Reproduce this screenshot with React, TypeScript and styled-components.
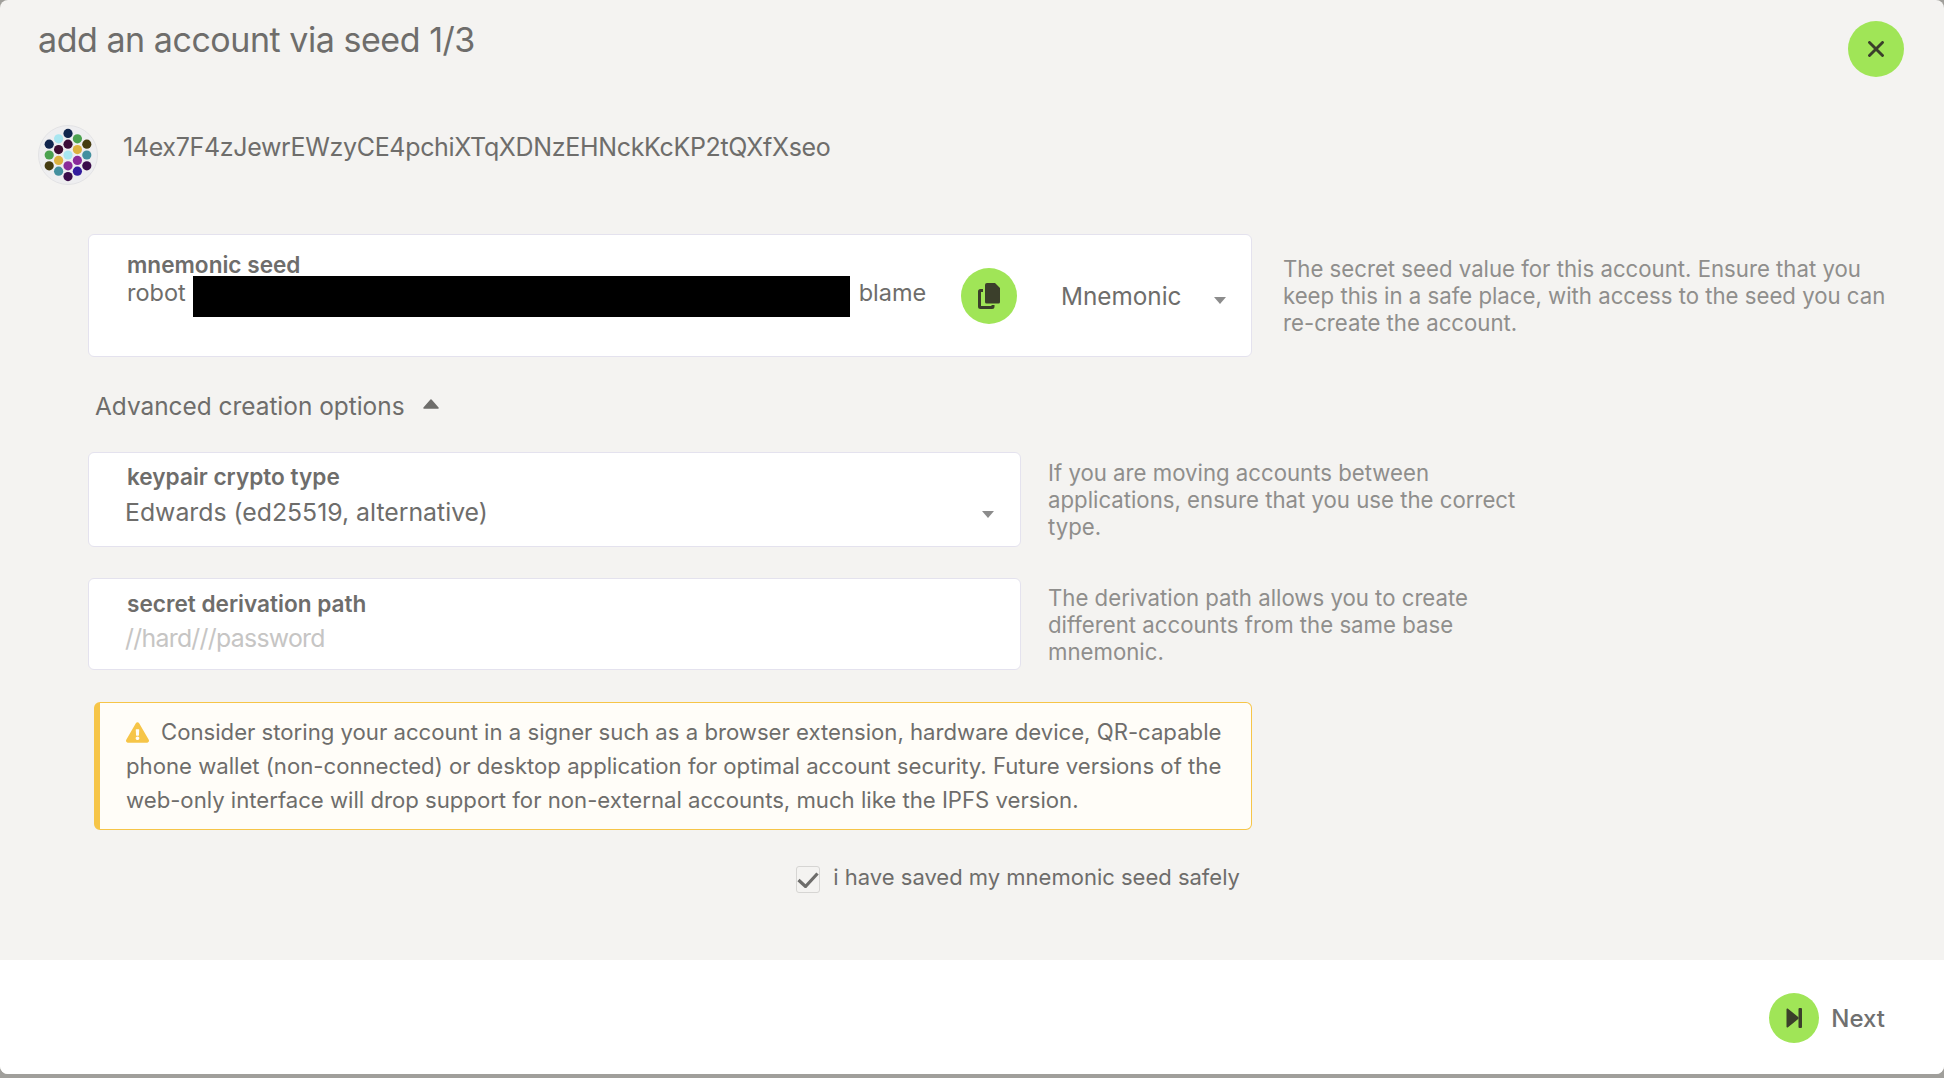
import React from "react";
import styled, { createGlobalStyle } from "styled-components";
import { FaExclamationTriangle } from "react-icons/fa";

const Global = createGlobalStyle`
  html, body { margin: 0; padding: 0; background: #a09f9b; }
  body { width: 1944px; height: 1078px; overflow: hidden; font-family: Inter, "Liberation Sans", sans-serif; }
  * { box-sizing: border-box; }
`;
const Modal = styled.div`
  width: 1944px; height: 1074px; background: #f4f3f1; border-radius: 8px; display: flex; flex-direction: column; color: #6e6d6b; overflow: hidden;
`;
const Body = styled.div`flex: 1; display: flex; flex-direction: column; padding: 0 0 0 38px; min-height: 0;`;
const Header = styled.div`display: flex; justify-content: space-between; align-items: flex-start; padding: 21px 40px 0 0; height: 120px;`;
const Title = styled.h1`margin: 0; font-size: 34px; line-height: 38px; font-weight: 400; letter-spacing: -0.46px;`;
const RoundButton = styled.button<{ $size: number }>`
  width: ${p => p.$size}px; height: ${p => p.$size}px; border-radius: 50%; border: 0; padding: 0; background: #a0e557; color: #3b3f2b;
  display: flex; align-items: center; justify-content: center; flex: none;
`;
const AddressRow = styled.div`display: flex; align-items: flex-start; gap: 25px; height: 114px;`;
const Avatar = styled.svg`width: 60px; height: 60px; display: block; flex: none; margin-top: 5px;`;
const Address = styled.div`font-size: 25px; line-height: 30px; margin-top: 12px; letter-spacing: -0.33px;`;
const FormRow = styled.div<{ $mt?: number }>`display: flex; align-items: flex-start; margin: ${p => p.$mt ?? 0}px 0 0 50px;`;
const Help = styled.div<{ $w: number; $pt: number; $ml: number }>`
  width: ${p => p.$w}px; font-size: 22.2px; line-height: 27px; color: #8f8e8c; padding-top: ${p => p.$pt}px; margin-left: ${p => p.$ml}px;
`;
const Card = styled.div<{ $w: number; $h: number }>`
  width: ${p => p.$w}px; height: ${p => p.$h}px; background: #fff; border: 1px solid #e4e2ee; border-radius: 6px; flex: none; padding: 11px 24px 0 38px;
`;
const SeedCard = styled(Card)`display: flex; align-items: flex-start; padding-top: 17px;`;
const SeedMain = styled.div`flex: 1;`;
const Label = styled.div`font-size: 22.6px; line-height: 26px; font-weight: 600; color: #6e6d6b;`;
const SecretLabel = styled(Label)`margin: 1px 0 -1px;`;
const SeedLine = styled.div`display: flex; align-items: flex-start; font-size: 23.5px; line-height: 28px; margin-top: 1px;`;
const Redaction = styled.span`display: block; width: 657px; height: 41px; background: #000; margin: -3px 9px 0 7px;`;
const Caret = styled.span`
  width: 0; height: 0; border-left: 6px solid transparent; border-right: 6px solid transparent; border-top: 7px solid #8c8c8c; display: block;
`;
const SeedSide = styled.div`display: flex; align-items: center; width: 266px; height: 100%; padding-bottom: 17px; flex: none;`;
const SeedType = styled.span`font-size: 24.3px; margin-left: 44px; margin-right: 33px;`;
const SeedCaret = styled(Caret)`margin-top: 10px;`;
const Advanced = styled.div`display: flex; align-items: center; gap: 18px; font-size: 24.4px; line-height: 30px; margin: 34px 0 0 57px; height: 30px;`;
const UpCaret = styled.svg`width: 16px; height: 10px; display: block; margin-bottom: 4px;`;
const Value = styled.div`font-size: 24.8px; line-height: 34px; margin: 5px 0 0 -2px; display: flex; justify-content: space-between; align-items: center;`;
const Placeholder = styled(Value)`color: #c6c5c4; letter-spacing: -0.7px;`;
const SelectCaret = styled(Caret)`margin: 5px 2px 0 0;`;
const Warning = styled.div`
  width: 1158px; height: 128px; margin: 32px 0 0 56px; background: #fffdf8; border: 1px solid #f6c548; border-left: 6px solid #f6c548; border-radius: 6px;
  padding: 12px 20px 0 26px; font-size: 22.15px; line-height: 34px; color: #6e6d6b;
`;
const WarnIcon = styled(FaExclamationTriangle)`width: 23px; height: 21px; color: #f6c548; vertical-align: -3px; margin-right: 12px;`;
const CheckRow = styled.div`display: flex; justify-content: flex-end; width: 1190px; margin: 32px 0 0 12px; gap: 13px; font-size: 22px; line-height: 30px;`;
const CheckBox = styled.span`
  display: flex; align-items: center; justify-content: center; width: 24px; height: 27px; margin-top: 4px; border: 1px solid #d6d5d3; border-radius: 3px; overflow: visible;
`;
const CheckMark = styled.svg`width: 22px; height: 16px; flex: none;`;
const Footer = styled.div`height: 114px; flex: none; background: #fff; display: flex; align-items: center; justify-content: flex-end; gap: 12px; padding: 2px 59px 0 0;`;
const NextLabel = styled.span`font-size: 24px; font-weight: 500; color: #707070;`;

const dots: [number, number, string][] = [
  [0, -4, "#10254d"], [-1, -3, "#a8e6f0"], [1, -3, "#4ba24f"], [-2, -2, "#10254d"], [0, -2, "#3b0d38"], [2, -2, "#453c10"],
  [-1, -1, "#3d0d32"], [1, -1, "#dcb23f"], [-2, 0, "#4ba24f"], [0, 0, "#a8e6f0"], [2, 0, "#43909f"],
  [-1, 1, "#dcb23f"], [1, 1, "#8a2b9a"], [-2, 2, "#453c10"], [0, 2, "#8a2b9a"], [2, 2, "#3b0d4a"],
  [-1, 3, "#43909f"], [1, 3, "#341d9e"], [0, 4, "#3b0d4a"],
];

export default function App() {
  return (
    <>
      <Global />
      <Modal>
        <Body>
          <Header>
            <Title>add an account via seed 1/3</Title>
            <RoundButton $size={56} aria-label="close">
              <svg width="16" height="16" viewBox="0 0 16 16"><path d="M1.5 1.5l13 13M14.5 1.5l-13 13" stroke="currentColor" strokeWidth="2.9" strokeLinecap="round" fill="none" /></svg>
            </RoundButton>
          </Header>
          <AddressRow>
            <Avatar viewBox="0 0 60 60">
              <circle cx="30" cy="30" r="29.5" fill="#eeeef0" stroke="#e2e2e4" />
              {dots.map(([x, y, c]) => <circle key={`${x}-${y}`} cx={30 + x * 9.4} cy={30 + y * 5.4} r="4.6" fill={c} />)}
            </Avatar>
            <Address>14ex7F4zJewrEWzyCE4pchiXTqXDNzEHNckKcKP2tQXfXseo</Address>
          </AddressRow>
          <FormRow>
            <SeedCard $w={1164} $h={123}>
              <SeedMain>
                <Label>mnemonic seed</Label>
                <SeedLine>robot<Redaction />blame</SeedLine>
              </SeedMain>
              <SeedSide>
                <RoundButton $size={56} aria-label="copy">
                  <svg width="22" height="26" viewBox="0 0 22 26" fill="currentColor">
                    <path d="M9 0h8l5 5v14a1.5 1.5 0 0 1-1.5 1.5H8.5A1.5 1.5 0 0 1 7 19V2a2 2 0 0 1 2-2z" />
                    <path d="M5 7.5H2.5a1 1 0 0 0-1 1v15a1 1 0 0 0 1 1H14a1 1 0 0 0 1-1v-1.5" fill="none" stroke="currentColor" strokeWidth="3" />
                  </svg>
                </RoundButton>
                <SeedType>Mnemonic</SeedType>
                <SeedCaret />
              </SeedSide>
            </SeedCard>
            <Help $w={610} $pt={21} $ml={31}>The secret seed value for this account. Ensure that you keep this in a safe place, with access to the seed you can re-create the account.</Help>
          </FormRow>
          <Advanced>
            Advanced creation options
            <UpCaret viewBox="0 0 16 10"><path d="M8 1L15 9H1z" fill="#6e6d6b" stroke="#6e6d6b" strokeWidth="1.5" strokeLinejoin="round" /></UpCaret>
          </Advanced>
          <FormRow $mt={31}>
            <Card $w={933} $h={95}>
              <Label>keypair crypto type</Label>
              <Value>Edwards (ed25519, alternative)<SelectCaret /></Value>
            </Card>
            <Help $w={480} $pt={7} $ml={27}>If you are moving accounts between applications, ensure that you use the correct type.</Help>
          </FormRow>
          <FormRow $mt={31}>
            <Card $w={933} $h={92}>
              <SecretLabel>secret derivation path</SecretLabel>
              <Placeholder>//hard///password</Placeholder>
            </Card>
            <Help $w={480} $pt={6} $ml={27}>The derivation path allows you to create different accounts from the same base mnemonic.</Help>
          </FormRow>
          <Warning>
            <WarnIcon />
            Consider storing your account in a signer such as a browser extension, hardware device, QR-capable phone wallet (non-connected) or desktop application for optimal account security. Future versions of the web-only interface will drop support for non-external accounts, much like the IPFS version.
          </Warning>
          <CheckRow>
            <CheckBox>
              <CheckMark viewBox="0 0 22 16"><path d="M1.5 8l7 6.5L20.5 1.5" stroke="#6e6d6b" strokeWidth="3.2" fill="none" /></CheckMark>
            </CheckBox>
            i have saved my mnemonic seed safely
          </CheckRow>
        </Body>
        <Footer>
          <RoundButton $size={50} aria-label="next">
            <svg width="16" height="20" viewBox="0 0 16 20" fill="currentColor">
              <path d="M.5 1.5C.5.6 1.4.2 2 .7L12.5 9.2v1.6L2 19.3c-.6.5-1.5.1-1.5-.8z" />
              <rect x="12.5" y="0" width="3.5" height="20" rx="1" />
            </svg>
          </RoundButton>
          <NextLabel>Next</NextLabel>
        </Footer>
      </Modal>
    </>
  );
}
